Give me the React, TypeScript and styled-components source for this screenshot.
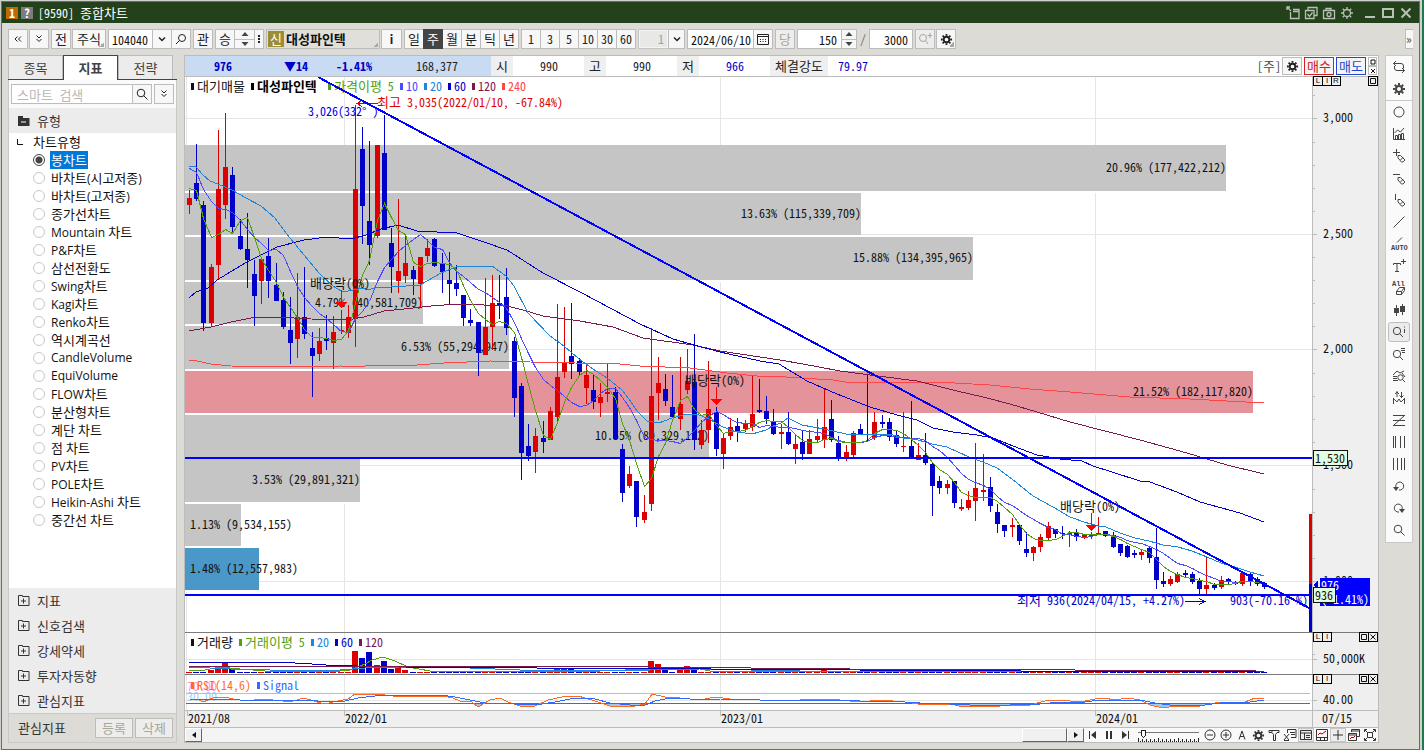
import React from "react";
import styled, { createGlobalStyle, css } from "styled-components";

const MONO = `"Noto Sans Mono CJK KR", "Noto Sans CJK KR", monospace`;
const UI = `"Open Sans", "Noto Sans Mono CJK KR", "Noto Sans CJK KR", sans-serif`;
const RED = "#dd0000";
const BLUE = "#0000c8";
const LINE = "#bcbcbc";

const Global = createGlobalStyle`
  * { box-sizing: border-box; }
  body { margin: 0; background: #c9cac8; font-family: ${MONO}; font-size: 12px; line-height: 16px; color: #111; }
  button, input, select { font: inherit; color: inherit; margin: 0; padding: 0; border: 0; background: none; border-radius: 0; }
`;

/* Hangul is set one pixel larger than the Latin letters and digits beside it. */
const Hangul = styled.span`
  font-size: 13px;
`;
const Mix = ({ children, svg }: { children: string; svg?: boolean }) => (
  <>
    {children
      .split(/([\uac00-\ud7a3]+)/)
      .filter(Boolean)
      .map((s, i) => (/[\uac00-\ud7a3]/.test(s) ? <Hangul as={svg ? "tspan" : "span"} key={i}>{s}</Hangul> : s))}
  </>
);

/* ---------- window frame ---------- */
const Desktop = styled.div`
  min-height: 100vh;
  display: flex;
  padding: 1px 4px 0 1px;
  background: linear-gradient(to left, #1f7a4a 2px, #d0d0d0 2px);
`;
const Window = styled.div`
  flex: 1;
  min-width: 0;
  display: flex;
  flex-direction: column;
  border: 1px solid #6a6c68;
  background: #dcdbd5;
`;
const TitleBar = styled.header`
  height: 21px;
  display: flex;
  align-items: center;
  gap: 3px;
  padding: 0 6px 0 4px;
  background: #23421b;
  color: #fff;
`;
const TitleBadge = styled.span<{ $bg: string }>`
  width: 12px;
  height: 12px;
  background: ${(p) => p.$bg};
  font-weight: 700;
  line-height: 12px;
  text-align: center;
`;
const Title = styled.h1`
  flex: 1;
  margin: 0 0 0 2px;
  font-size: 12px;
  font-weight: 400;
`;
const TitleButton = styled.button`
  width: 15px;
  height: 16px;
  display: flex;
  align-items: center;
  justify-content: center;
  color: #b9c0b5;
`;

/* ---------- toolbar ---------- */
const Toolbar = styled.div`
  height: 32px;
  display: flex;
  align-items: center;
  padding: 0 6px;
  gap: 2px;
`;
const boxed = css`
  height: 20px;
  border: 1px solid ${LINE};
  background: #f7f7f7;
`;
const ToolButton = styled.button<{ $w?: number; $h?: number; $muted?: boolean; $active?: boolean; $corner?: boolean }>`
  ${boxed}
  width: ${(p) => p.$w ?? 20}px;
  height: ${(p) => p.$h ?? 20}px;
  flex: none;
  display: flex;
  align-items: center;
  justify-content: center;
  color: ${(p) => (p.$active ? "#fff" : p.$muted ? "#a9a59a" : "#222")};
  ${(p) => p.$active && "background: #444; border-color: #444; z-index: 1;"}
  ${(p) => p.$muted && "background: #ededeb;"}
  ${(p) => p.$corner && `background: linear-gradient(135deg, transparent 50%, #a8a8a8 50%) right 1px bottom 1px / 5px 5px no-repeat, #f7f7f7;`}
`;
const Joined = styled.div`
  display: flex;
  flex: none;
  & > * + * { margin-left: -1px; }
`;
const Pair = styled.div`
  display: flex;
  flex: none;
  gap: 1px;
`;
const Field = styled.input<{ $w: number; $right?: boolean }>`
  ${boxed}
  width: ${(p) => p.$w}px;
  background: #fff;
  padding: 0 ${(p) => (p.$right ? 4 : 0)}px 0 ${(p) => (p.$right ? 0 : 3)}px;
  text-align: ${(p) => (p.$right ? "right" : "left")};
`;
const StockName = styled.button`
  ${boxed}
  width: 114px;
  flex: none;
  display: flex;
  align-items: center;
  gap: 2px;
  padding: 0 1px;
  background: linear-gradient(135deg, transparent 50%, #a8a8a8 50%) right 1px bottom 1px / 5px 5px no-repeat, #e0dfda;
  font-weight: 700;
  font-size: 13px;
`;
const NewMark = styled.span`
  width: 16px;
  height: 16px;
  background: #9b8d33;
  color: #fff;
  font-weight: 400;
  text-align: center;
`;
const SpinBox = styled.div<{ $w: number }>`
  ${boxed}
  width: ${(p) => p.$w}px;
  display: flex;
  flex-direction: column;
  & button { flex: 1; display: flex; align-items: center; justify-content: center; color: #444; }
  & button + button { border-top: 1px solid ${LINE}; }
`;
const PickSelect = styled.select`
  ${boxed}
  width: 31px;
  appearance: none;
  background: #eee;
  box-shadow: inset 0 0 0 1px #fff;
  color: #888;
  text-align: right;
  padding-right: 4px;
`;
const Slash = styled.span`
  width: 8px;
  text-align: center;
  color: #666;
`;
const Spacer = styled.span<{ $w?: number }>`
  ${(p) => (p.$w ? `width: ${p.$w}px; flex: none;` : "flex: 1;")}
`;
const MoreButton = styled.button`
  ${boxed}
  width: 8px;
  border-right: 0;
  color: #444;
  line-height: 12px;
  display: flex;
  align-items: center;
`;

/* ---------- workspace ---------- */
const Workspace = styled.main`
  flex: 1;
  display: flex;
  align-items: stretch;
  padding: 0 6px 6px;
`;
const SidePanel = styled.aside`
  width: 169px;
  flex: none;
  margin-right: 7px;
  display: flex;
  flex-direction: column;
`;
const Tabs = styled.div`
  height: 25px;
  display: flex;
  border-bottom: 1px solid #444;
`;
const Tab = styled.button<{ $on?: boolean }>`
  width: 55px;
  height: ${(p) => (p.$on ? 25 : 24)}px;
  border: 1px solid ${(p) => (p.$on ? "#444" : LINE)};
  border-bottom: 0;
  background: ${(p) => (p.$on ? "#fff" : "#ececec")};
  font-weight: ${(p) => (p.$on ? 700 : 400)};
  color: #444;
`;
const SideBody = styled.div`
  flex: 1;
  display: flex;
  flex-direction: column;
  border: 1px solid #c9c9c9;
  border-top: 0;
  background: #fff;
`;
const SearchRow = styled.div`
  display: flex;
  gap: 2px;
  padding: 4px 2px;
  background: #fafafa;
`;
const SearchInput = styled.input`
  ${boxed}
  width: 122px;
  background: #fff;
  padding-left: 5px;
  &::placeholder { color: #b8b8b8; opacity: 1; font-size: 13px; }
`;
const Section = styled.button`
  width: 100%;
  height: 25px;
  display: flex;
  align-items: center;
  gap: 7px;
  padding-left: 9px;
  background: #ececec;
  color: #333;
  text-align: left;
`;
const TreeHead = styled.div`
  height: 18px;
  display: flex;
  align-items: center;
  font-family: ${UI};
  color: #111;
  gap: 10px;
  padding-left: 8px;
`;
const TypeList = styled.ul`
  list-style: none;
  margin: 0;
  padding: 0;
  flex: 1;
`;
const TypeRow = styled.li`
  height: 18px;
  display: flex;
  align-items: center;
  gap: 5px;
  padding-left: 24px;
  font-family: ${UI};
`;
const Radio = styled.input`
  appearance: none;
  width: 12px;
  height: 12px;
  border: 1px solid #c8c8c8;
  border-radius: 50%;
  background: #fff;
  &:checked { border-color: #444; background: radial-gradient(circle, #444 3px, #fff 4px); }
`;
const TypeLabel = styled.label<{ $on: boolean }>`
  height: 18px;
  padding: 0 1px;
  line-height: 18px;
  white-space: nowrap;
  ${(p) => p.$on && "background: #0078d7; color: #fff;"}
`;
const SideFoot = styled.div`
  height: 29px;
  display: flex;
  align-items: center;
  gap: 2px;
  padding: 0 3px 0 9px;
  border-top: 1px solid #c9c9c9;
  background: #dcdbd5;
  color: #333;
`;
const FootTitle = styled.span`
  flex: 1;
`;

/* ---------- chart frame ---------- */
const ChartFrame = styled.section`
  flex: 1;
  min-width: 0;
  display: flex;
  flex-direction: column;
  border: 1px solid ${LINE};
  background: #fff;
`;
const Quote = styled.div`
  height: 21px;
  display: flex;
  align-items: center;
  border-bottom: 1px solid ${LINE};
  line-height: 20px;
`;
const Cell = styled.span<{ $w: number; $kind?: "band" | "label"; $align?: string; $pad?: number; $color?: string; $bold?: boolean }>`
  width: ${(p) => p.$w}px;
  flex: none;
  height: 20px;
  white-space: nowrap;
  text-align: ${(p) => p.$align ?? "center"};
  padding-right: ${(p) => p.$pad ?? 0}px;
  color: ${(p) => p.$color ?? "#222"};
  font-weight: ${(p) => (p.$bold ? 700 : 400)};
  background: ${(p) => (p.$kind === "band" ? "#c9dbf2" : p.$kind === "label" ? "#efefef" : "transparent")};
`;
const OrderButton = styled.button<{ $c: string }>`
  width: 30px;
  height: 18px;
  margin-left: 2px;
  border: 1px solid ${(p) => p.$c};
  background: #f4f4f8;
  color: ${(p) => p.$c};
  line-height: 16px;
`;
const MiniStack = styled.div`
  display: flex;
  flex-direction: column;
  margin: 0 1px 0 2px;
  & button { width: 9px; height: 9px; border: 1px solid ${LINE}; display: flex; align-items: center; justify-content: center; }
`;
const Pane = styled.div<{ $h: number; $line: string }>`
  height: ${(p) => p.$h}px;
  display: flex;
  border-bottom: 1px solid ${(p) => p.$line};
`;
const PlotBox = styled.div`
  flex: 1;
  min-width: 0;
  & svg { display: block; }
`;
const Axis = styled.div`
  width: 66px;
  flex: none;
  position: relative;
  border-left: 1px solid ${LINE};
  background: #efefef;
`;
const AxisKeys = styled.div<{ $side: "left" | "right" }>`
  position: absolute;
  top: -1px;
  ${(p) => p.$side}: 0;
  display: flex;
  & > * + * { margin-left: -1px; }
`;
const AxisKey = styled.button`
  width: 10px;
  height: 10px;
  border: 1px solid #000;
  background: #efefef;
  display: flex;
  align-items: center;
  justify-content: center;
  font-family: "Liberation Sans", sans-serif;
  font-size: 8px;
  line-height: 8px;
`;
const DateBar = styled.div`
  height: 17px;
  display: flex;
  border-bottom: 1px solid ${LINE};
  background: #efefef;
  & svg { overflow: visible; }
`;
const Bottom = styled.div`
  height: 14px;
  display: flex;
  background: #f9f9f9;
`;
const Track = styled.div`
  flex: 1;
  display: flex;
  justify-content: space-between;
  background: #f4f4f4;
`;
const Raised = styled.button<{ $w: number }>`
  width: ${(p) => p.$w}px;
  height: 14px;
  border: 1px solid #fff;
  border-right-color: #666;
  border-bottom-color: #666;
  background: #f0f0f0;
  display: flex;
  align-items: center;
  justify-content: center;
`;
const PlayGroup = styled.div`
  display: flex;
  align-items: center;
  padding: 0 1px;
`;
const SmallTool = styled.button<{ $on?: boolean }>`
  width: 16px;
  height: 14px;
  display: flex;
  align-items: center;
  justify-content: center;
  color: #333;
  ${(p) => p.$on && "background: #ececec; box-shadow: 0 0 0 1px #c6c6c6 inset;"}
`;

/* ---------- drawing tools on the right ---------- */
const ToolRail = styled.nav`
  width: 28px;
  flex: none;
  align-self: flex-start;
  margin-left: 6px;
  border: 1px solid #c8c8c8;
  background: #fafafa;
  display: flex;
  flex-direction: column;
  align-items: center;
  padding-bottom: 1px;
`;
const RailButton = styled.button<{ $on?: boolean; $last?: boolean }>`
  width: ${(p) => (p.$on ? 22 : 26)}px;
  height: ${(p) => (p.$on ? 20 : 22)}px;
  margin: ${(p) => (p.$on ? "1px 0" : "0")};
  display: flex;
  align-items: center;
  justify-content: center;
  color: #444;
  ${(p) => p.$last && `height: 23px; border-bottom: 1px solid #c8c8c8;`}
  ${(p) => p.$on && "border: 1px solid #bdbdbd; border-radius: 3px; background: #ececec;"}
`;

/* ---------- icons ---------- */
const I = ({ d, s = 14, f, w = 1, children }: { d?: string; s?: number; f?: string; w?: number; children?: React.ReactNode }) => (
  <svg width={s} height={s} viewBox={`0 0 ${s} ${s}`} fill="none" stroke="currentColor" strokeWidth={w}>
    {d && <path d={d} />}
    {f && <path d={f} fill="currentColor" stroke="none" />}
    {children}
  </svg>
);
const Gear = ({ s = 14, thin }: { s?: number; thin?: boolean }) => (
  <svg width={s} height={s} viewBox="0 0 14 14" fill="none" stroke="currentColor">
    <circle cx="7" cy="7" r={thin ? 3.5 : 3} strokeWidth={thin ? 1.3 : 2} />
    <path d="M7 1v2M7 11v2M1 7h2M11 7h2M2.8 2.8l1.4 1.4M9.8 9.8l1.4 1.4M2.8 11.2l1.4-1.4M9.8 4.2l1.4-1.4" strokeWidth={thin ? 1.3 : 2} />
  </svg>
);
const Lens = () => <I d="M8.700 8.700L12.500 12.500"><circle cx="6" cy="6" r="3.800" /></I>;
const Chevrons = ({ down }: { down?: boolean }) => (
  <I s={10} d={down ? "M2.5 1.5l2.5 2.5 2.5-2.5M2.5 5l2.5 2.5 2.5-2.5" : "M4.5 2.5L2 5l2.500 2.500M8 2.500L5.500 5l2.500 2.500"} />
);
const UpTri = () => <I s={8} f="M0.500 6h7L4 2z" />;
const DownTri = () => <I s={8} f="M0.500 2h7L4 6z" />;

const pen = "M6 6.500h2.500l4.500 4.500-2 2h-1.500L6 9zM8.500 11l2.500-2.500";
const railIcons: { name: string; icon: React.ReactNode }[] = [
  { name: "새로고침", icon: <I d="M4 1L1.500 3.500 4 6M1.500 3.500h7.500q2.500 0 2.500 2.500v2.500M10 8l2.500 2.500L10 13M12.500 10.500H5Q2.500 10.500 2.500 8V6" /> },
  { name: "설정", icon: <Gear /> },
  { name: "원", icon: <I><circle cx="7" cy="7" r="5" /></I> },
  { name: "지표", icon: <I d="M1.500 1v11.500H13M3.500 12V8.500h2V12M6.500 12V7.500h2V12M9.500 12V6.500h2V12M2.500 6l3-3 3 2 3.500-4" /> },
  { name: "십자 그리기", icon: <I d={`M4.500 0v7M1 3.500h7${pen}`} /> },
  { name: "수평선 그리기", icon: <I d={`M1 3.500h7${pen}`} /> },
  { name: "수직선 그리기", icon: <I d={`M3.500 1v6${pen}`} /> },
  { name: "추세선", icon: <I d="M1.500 12.500l11-11" /> },
  {
    name: "자동 추세선",
    icon: (
      <svg width="18" height="16" viewBox="0 0 18 16">
        <path d="M7 6.500l5-5" stroke="currentColor" />
        <text x="1" y="14" fontSize="7" fontWeight="700" fill="currentColor" fontFamily="Liberation Mono, monospace">AUTO</text>
      </svg>
    ),
  },
  { name: "글자", icon: <I d="M1.500 6V4.500h7V6M5 4.500v8.500M3 12.500h4M11.500 0v5M9 2.500h5" /> },
  {
    name: "모두 지우기",
    icon: (
      <svg width="18" height="16" viewBox="0 0 18 16" fill="none" stroke="currentColor">
        <text x="2" y="6" fontSize="7" fontWeight="700" fill="currentColor" stroke="none" fontFamily="Liberation Mono, monospace">All</text>
        <path d="M6.500 11.500l3-4h5v3l-3 4h-5zM6.500 11.500h5l3-4M11.500 11.500v3" />
      </svg>
    ),
  },
  { name: "봉", icon: <I d="M4.500 2v11M10.500 1v11" f="M2 5h5v5H2zM8 3h5v6H8z" /> },
  { name: "정보 조회", icon: <I d="M7.800 8.800L11 12M12.500 4v4" f="M12 1.500h1v1h-1z"><circle cx="5" cy="6" r="3.700" /></I> },
  { name: "목록 조회", icon: <I d="M7.800 9.800L11 13M9 1.500h4M9 3.500h4M10 5.500h3"><circle cx="5" cy="7" r="3.700" /></I> },
  { name: "차트 조회", icon: <I d="M1 6l4-4 3 2 4-2M1 7.500h4M1 9.500h4M1 11.500h5M10.500 10.500l2.500 2.500M10 4l3 4"><circle cx="8.500" cy="8.500" r="2.700" /></I> },
  { name: "고저 표시", icon: <I d="M1.500 7v6M12.500 7v6M2 8l3 3 2-3 2 3 3-3M5 0v6M3 3l2-2 2 2M9.500 1v6M7.500 4.500l2 2 2-2" /> },
  { name: "패턴", icon: <I d="M1 2.500h12M1 7.500h12M1 12.500h12M12 3L2 12" /> },
  { name: "세로선", icon: <I d="M1.500 1v12M3.500 1v12M8.500 1v12M12.500 1v12" /> },
  { name: "등간격선", icon: <I d="M1.500 1v12M5.500 1v12M9.500 1v12M12.500 1v12" /> },
  { name: "되돌리기", icon: <I d="M4 8.500A4 4 0 1 1 7 11" f="M1 8h6l-3 4z" /> },
  { name: "다시하기", icon: <I d="M10 8.500A4 4 0 1 0 7 11" f="M7 8h6l-3 4z" /> },
  { name: "확대", icon: <Lens /> },
];

/* ---------- data ---------- */
/* [high, body top, body bottom, low, 1 = rise] per weekly candle, as chart ordinates */
const candles: number[][] = [
  [190,198,205,214,1],[144,183,199,201,0],[201,205,323,331,0],[264,267,323,327,1],[130,189,265,280,1],[113,167,205,219,1],[167,175,227,232,0],[219,236,249,250,0],[213,249,260,288,0],[260,274,296,326,0],
  [257,259,281,304,1],[238,256,281,298,0],[263,285,301,301,0],[292,300,327,329,0],[297,330,343,364,0],[273,317,339,358,1],[267,317,334,339,0],[332,348,356,397,0],[328,341,354,361,1],[315,338,341,350,0],
  [316,332,343,369,1],[310,330,331,334,1],[305,317,333,338,1],[105,189,318,347,1],[127,149,206,244,0],[141,221,245,265,0],[145,145,236,238,1],[115,153,230,230,0],[228,243,267,293,0],[199,271,281,293,1],
  [234,263,276,283,1],[266,270,279,295,0],[257,257,284,307,1],[239,248,256,262,1],[238,239,266,267,0],[253,264,272,293,0],[252,280,284,305,0],[265,283,289,296,0],[295,295,318,326,0],[309,320,323,326,0],
  [322,322,353,376,0],[278,327,355,355,1],[275,303,327,350,1],[275,303,305,319,0],[268,297,328,335,0],[337,341,398,417,0],[383,386,453,480,0],[424,446,456,461,0],[428,436,452,473,1],[421,438,442,453,0],
  [407,411,440,440,1],[304,377,417,422,1],[307,362,372,378,1],[303,356,364,379,0],[358,361,372,376,0],[363,375,388,404,1],[375,390,402,409,0],[383,397,403,417,1],[364,392,394,402,1],[387,392,439,439,0],
  [444,449,493,502,0],[466,474,486,488,1],[481,481,517,527,0],[495,512,520,523,1],[328,396,504,511,1],[357,383,393,420,1],[374,389,401,406,0],[375,407,417,417,0],[357,404,419,430,1],[349,381,390,394,1],
  [334,382,440,450,0],[420,430,445,449,1],[361,409,430,443,1],[407,412,449,456,0],[434,438,454,469,1],[418,427,436,440,1],[418,426,431,442,0],[420,424,429,432,1],[376,414,427,431,1],[379,410,412,413,0],
  [396,411,419,424,0],[409,421,434,435,0],[424,432,434,449,1],[412,432,444,445,0],[435,444,449,464,1],[431,442,454,460,0],[430,439,454,454,1],[419,436,440,442,1],[388,427,440,448,1],[400,419,440,442,0],
  [436,443,458,461,0],[445,452,458,461,1],[431,433,455,457,1],[424,429,434,435,0],[374,434,435,441,0],[412,422,438,440,1],[415,422,424,428,0],[418,422,437,441,0],[430,435,444,447,0],[412,446,447,452,1],
  [401,446,459,459,0],[443,455,460,460,1],[433,455,463,465,0],[462,464,486,516,0],[476,481,488,494,0],[480,484,488,494,1],[481,481,503,508,0],[499,507,509,511,1],[491,500,508,510,1],[443,488,501,521,1],
  [454,490,492,501,1],[477,487,506,512,0],[504,512,524,533,0],[525,525,531,537,0],[518,525,527,537,1],[525,525,541,545,0],[532,549,553,557,0],[546,547,553,561,1],[534,537,547,552,1],[522,526,538,540,1],
  [529,529,534,538,0],[526,533,534,539,0],[531,533,535,547,1],[529,532,537,541,0],[534,535,538,539,1],[532,534,536,539,1],[517,533,534,535,1],[531,531,536,537,0],[532,535,547,548,0],[544,544,553,556,0],
  [545,546,557,558,0],[550,553,555,558,0],[549,552,555,560,1],[547,548,558,563,0],[528,557,580,589,0],[572,581,584,587,0],[576,579,584,586,1],[572,574,582,583,1],[570,573,575,578,0],[572,574,582,584,0],
  [578,581,589,594,0],[557,585,589,595,1],[583,585,588,590,0],[576,580,587,589,1],[578,579,581,584,0],[581,582,584,585,0],[571,573,584,586,1],[573,574,582,586,0],[577,579,584,586,0],[582,583,587,589,0],
];
const cx = (i: number) => Math.round(189 + i * 7.215);
const series = (ys: number[]) => ys.map((y, i) => `${cx(i) + 0.5},${y + 0.5}`).join(" ");
const ma5 = [188,190,218,237,234,229,233,220,217,237,258,270,282,297,307,317,329,337,337,338,340,339,330,303,275,260,220,203,217,230,234,262,266,263,262,263,264,269,285,300,313,319,324,321,323,332,357,384,410,435,439,422,402,387,375,370,374,380,387,398,423,440,463,486,478,456,443,420,400,396,409,415,413,425,433,431,431,430,426,422,420,421,421,427,434,440,442,442,439,438,441,442,442,442,440,433,429,429,430,433,439,445,452,462,469,474,482,492,495,497,497,497,501,507,514,524,533,538,540,540,539,536,532,532,534,534,534,534,536,539,543,546,549,552,559,566,571,574,577,578,580,581,584,584,584,583,581,581,582,584];
const ma10 = [168,172,189,201,208,209,212,220,229,237,243,250,249,255,271,286,297,306,313,318,324,331,332,318,311,301,281,267,259,251,245,239,234,240,247,249,262,271,276,282,289,292,297,302,308,322,338,353,367,379,385,390,396,402,406,405,400,393,388,388,397,407,420,437,439,440,440,441,443,437,430,422,416,411,414,419,422,423,423,427,425,426,427,427,428,430,431,432,433,437,440,442,442,442,441,437,435,435,437,437,438,438,440,446,450,457,465,473,479,482,485,489,496,502,505,510,515,519,523,527,529,534,534,536,537,536,534,534,535,537,540,542,543,546,549,553,558,563,565,568,572,575,578,581,581,582,581,581,582,584];
const ma20 = "189,166 196,167 203,175 210,181 218,184 232,190 246,198 261,206 275,218 290,238 304,255 319,273 333,286 341,291 348,291 363,288 369,290 376,287 391,287 406,286 420,285 427,281 441,273 456,267 470,266 492,266 506,276 514,286 528,313 550,336 564,346 579,359 593,369 607,378 622,390 629,399 637,411 647,421 659,423 672,418 687,414 697,414 709,419 723,427 737,432 752,434 766,430 773,426 781,423 788,418 802,425 824,429 846,434 868,435 890,434 903,438 918,440 932,444 947,447 969,457 983,462 997,468 1012,479 1033,496 1053,507 1070,517 1084,522 1098,526 1106,527 1120,533 1135,538 1149,541 1163,545 1178,547 1192,551 1207,557 1221,563 1235,567 1250,572 1264,576";
const ma60 = "189,298 196,292 208,288 217,280 247,262 277,247 304,240 327,237 351,239 366,235 381,229 398,225 417,231 457,233 484,242 507,250 543,273 580,292 640,324 673,339 694,345 720,352 760,361 779,364 807,381 837,394 870,407 897,415 917,420 933,428 953,432 977,435 993,438 1013,446 1037,455 1060,459 1082,461 1093,466 1112,472 1140,481 1150,482 1177,492 1200,502 1240,513 1264,522";
const ma120 = "189,331 211,327 231,322 251,318 277,317 311,319 347,320 364,317 384,311 404,309 431,306 457,304 484,305 503,305 523,310 543,316 580,321 613,327 643,338 693,345 720,351 780,360 803,364 840,371 870,375 917,381 957,391 983,397 1010,404 1037,412 1070,422 1140,440 1187,453 1227,465 1264,474";
const ma240 = "189,360 197,361 211,364 231,366 297,367 341,366 357,367 374,365 417,365 444,363 490,361 530,362 620,364 640,366 690,368 727,373 757,376 770,376 833,380 845,382 937,382 990,385 1030,389 1070,392 1130,397 1190,399 1264,403";

const profile = [
  { y: 145, h: 46, to: 1226, t: "20.96% (177,422,212)" },
  { y: 193, h: 42, to: 861, t: "13.63% (115,339,709)" },
  { y: 237, h: 43, to: 973, t: "15.88% (134,395,965)" },
  { y: 282, h: 42, to: 423, t: "4.79% (40,581,709)" },
  { y: 326, h: 43, to: 509, t: "6.53% (55,294,947)" },
  { y: 371, h: 42, to: 1253, t: "21.52% (182,117,820)", c: "#e5939a" },
  { y: 415, h: 42, to: 709, t: "10.55% (89,329,112)" },
  { y: 459, h: 43, to: 360, t: "3.53% (29,891,321)" },
  { y: 504, h: 42, to: 241, t: "1.13% (9,534,155)", left: true },
  { y: 548, h: 42, to: 259, t: "1.48% (12,557,983)", c: "#4a98c8", left: true },
];
const years = [
  { x: 187, t: "2021/08" },
  { x: 344, t: "2022/01" },
  { x: 720, t: "2023/01" },
  { x: 1095, t: "2024/01" },
];
const prices = [
  { y: 118, t: "3,000" },
  { y: 234, t: "2,500" },
  { y: 349, t: "2,000" },
  { y: 465, t: "1,500" },
  { y: 581, t: "1,000" },
];
const volumeBars: Record<number, number> = { 3: 3, 4: 6, 5: 10, 6: 4, 23: 22, 24: 15, 25: 21, 26: 8, 27: 12, 28: 4, 29: 6, 30: 3, 34: 2, 50: 3, 51: 4, 52: 4, 53: 4, 64: 12, 65: 9, 66: 5, 68: 5, 69: 7, 70: 5, 88: 3, 94: 3, 109: 3, 134: 3 };
const rsi = "190,699 197,699 203,702 213,698 225,697 233,699 247,701 262,699 283,701 293,701 304,698 317,702 325,704 333,702 348,699 355,694 365,695 377,694 393,696 410,696 443,696 453,698 460,701 472,702 478,707 490,700 500,698 508,702 520,706 535,706 548,700 562,697 578,696 592,700 610,706 630,707 645,704 652,694 665,697 680,698 700,700 715,697 730,699 760,700 800,700 830,699 860,702 880,700 905,702 925,705 940,704 952,704 962,707 975,706 1000,706 1030,705 1045,701 1060,700 1080,702 1095,699 1104,698 1115,700 1127,698 1140,700 1150,705 1163,708 1175,706 1200,706 1215,703 1225,702 1245,702 1255,698 1264,698";
const signal = "190,699 205,700 220,699 240,700 262,700 290,701 310,700 325,702 345,701 358,698 375,696 395,695 440,695 455,697 470,700 485,703 500,703 515,704 535,705 555,702 575,698 595,699 610,703 630,705 645,705 655,701 670,698 690,699 720,699 760,700 800,700 830,700 860,701 890,701 920,703 950,704 970,705 1010,705 1040,704 1060,702 1085,702 1100,700 1120,700 1140,700 1155,703 1170,705 1205,705 1220,703 1250,702 1264,700";

const chartTypes = ["봉차트", "바차트(시고저종)", "바차트(고저종)", "종가선차트", "Mountain 차트", "P&F차트", "삼선전환도", "Swing차트", "Kagi차트", "Renko차트", "역시계곡선", "CandleVolume", "EquiVolume", "FLOW차트", "분산형차트", "계단 차트", "점 차트", "PV차트", "POLE차트", "Heikin-Ashi 차트", "중간선 차트"];

/* ---------- chart parts ---------- */
const Label = styled.text<{ $bold?: boolean }>`
  font: ${(p) => (p.$bold ? 700 : 400)} 12px ${MONO};
  white-space: pre;
`;
const Plot = ({ top, height, children }: { top: number; height: number; children: React.ReactNode }) => (
  <PlotBox>
    <svg width="100%" height={height} viewBox={`185 ${top} 1127 ${height}`} preserveAspectRatio="xMinYMin meet" fill="none" shapeRendering="crispEdges">
      {years.map((g) => (
        <rect key={g.x} x={g.x === 187 ? 186 : g.x} y={top} width="1" height={height} fill="#e6e6e6" />
      ))}
      {children}
    </svg>
  </PlotBox>
);
type Key = { x: number; t: string; c: string; bold?: boolean };
const Legend = ({ y, items }: { y: number; items: Key[] }) => (
  <g>
    {items.map((k) => (
      <g key={k.t} fill={k.c}>
        <rect x={k.x} y={y - 3} width="3" height="7" />
        <Label x={k.x + 6} y={y + 5} $bold={k.bold}><Mix svg>{k.t}</Mix></Label>
      </g>
    ))}
  </g>
);
const Dividend = ({ x, y }: { x: number; y: number }) => (
  <g>
    <Label x={x - 31} y={y - 2} fill="#111"><Mix svg>배당락(0%)</Mix></Label>
    <rect x={x} y={y} width="1" height="14" fill="#f00" />
    <path d={`M${x - 5} ${y + 12}h11l-5.500 6z`} fill="#f00" />
  </g>
);
const Keys = ({ names, closable }: { names: string[]; closable?: boolean }) => (
  <>
    <AxisKeys $side="left">{names.map((n) => <AxisKey key={n}>{n}</AxisKey>)}</AxisKeys>
    <AxisKeys $side="right">
      <AxisKey aria-label="최대화"><I s={6} d="M0.500 0.500h5v5h-5z" /></AxisKey>
      {closable && <AxisKey aria-label="닫기"><I s={6} d="M0.500 0.500l5 5M5.500 0.500l-5 5" /></AxisKey>}
    </AxisKeys>
  </>
);

const MainPlot = () => (
  <Plot top={77} height={555}>
    {prices.map((p) => <rect key={p.t} x="185" y={p.y} width="1127" height="1" fill="#e6e6e6" />)}
    {profile.map((b) => (
      <g key={b.t}>
        <rect x="185" y={b.y} width={b.to - 185} height={b.h} fill={b.c ?? "#c5c5c5"} />
        <rect x="185" y={b.y + b.h} width={b.to - 185} height="2" fill="#fff" />
        <Label x={b.left ? 190 : b.to} y={b.y + Math.floor(b.h / 2) + 4} textAnchor={b.left ? "start" : "end"} fill="#111">{b.t}</Label>
      </g>
    ))}
    {candles.map(([hi, a, b, lo, up], i) => (
      <g key={i} fill={up ? RED : BLUE}>
        <rect x={cx(i)} y={hi} width="1" height={lo - hi} />
        <rect x={cx(i) - 2} y={a} width="5" height={Math.max(1, b - a)} />
      </g>
    ))}
    <polyline points={ma240} stroke="#ff4545" />
    <polyline points={ma120} stroke="#7a1850" />
    <polyline points={ma60} stroke={BLUE} />
    <polyline points={ma20} stroke="#1c86dc" />
    <polyline points={series(ma10)} stroke="#4b4bff" />
    <polyline points={series(ma5)} stroke="#52a00e" />
    <Dividend x={341} y={290} />
    <Dividend x={716} y={387} />
    <Dividend x={1091} y={513} />
    <Legend
      y={86}
      items={[
        { x: 191, t: "대기매물", c: "#111" },
        { x: 251, t: "대성파인텍", c: "#000", bold: true },
        { x: 328, t: "가격이평 5", c: "#52a00e" },
        { x: 400, t: "10", c: "#4b4bff" },
        { x: 424, t: "20", c: "#1c86dc" },
        { x: 448, t: "60", c: BLUE },
        { x: 472, t: "120", c: "#7a1850" },
        { x: 502, t: "240", c: "#ff4545" },
      ]}
    />
    <Label x="308" y="116" fill="#0000e0">3,026(332° )</Label>
    <path d="M357 103.500h21M362 100.500l-5 3 5 3" stroke={RED} />
    <Label x="377" y="107" fill={RED}><Mix svg>최고 3,035(2022/01/10, -67.84%)</Mix></Label>
    <Label x="1017" y="605" fill={BLUE}><Mix svg>최저 936(2024/04/15, +4.27%)</Mix></Label>
    <path d="M1185 601.500h20M1199 598.500l6 3-6 3" stroke={BLUE} />
    <Label x="1230" y="605" fill={BLUE}>903(-70.16 %)</Label>
    <rect x="185" y="457" width="1127" height="2" fill="#0000ff" />
    <rect x="185" y="594" width="1127" height="2" fill="#0000ff" />
    <path d="M318 77L1311 609" stroke="#0000ff" strokeWidth="2" />
    <rect x="1309" y="514" width="3" height="70" fill={RED} />
    <rect x="1309" y="584" width="3" height="48" fill={BLUE} />
  </Plot>
);
const MainAxis = () => (
  <Axis>
    <svg width="65" height="555" viewBox="1313 77 65 555" shapeRendering="crispEdges">
      {prices.map((p) => (
        <g key={p.t}>
          <rect x="1313" y={p.y} width="4" height="1" fill="#bbb" />
          {[23, 46, 69, 92].map((k) => <rect key={k} x="1313" y={p.y - k} width="2" height="1" fill="#bbb" />)}
          <Label x="1323" y={p.y + 4} fill="#111">{p.t}</Label>
        </g>
      ))}
      <rect x="1320" y="578" width="50" height="28" fill="#0000ff" />
      <path d="M1318 581v7l-5-3z" fill="#0000e0" />
      <Label x="1321" y="590" fill="#fff">976</Label>
      <Label x="1321" y="604" fill="#fff">(-1.41%)</Label>
      <rect x="1313.500" y="450.500" width="34" height="15" fill="#e2ffe2" stroke="#111" />
      <Label x="1315" y="463" fill="#111">1,530</Label>
      <rect x="1313.500" y="587.500" width="22" height="15" fill="#e2ffe2" stroke="#111" />
      <Label x="1315" y="600" fill="#111">936</Label>
    </svg>
    <Keys names={["L", "I", "R"]} />
  </Axis>
);
const VolumePane = () => (
  <Pane $h={42} $line="#7a7a7a">
    <Plot top={633} height={41}>
      <rect x="185" y="659" width="1127" height="1" fill="#e6e6e6" />
      {candles.map((c, i) => {
        const h = volumeBars[i] ?? 1;
        return <rect key={i} x={cx(i) - 3} y={673 - h} width="6" height={h} fill={c[4] ? RED : BLUE} />;
      })}
      <polyline points="189,671 205,670 220,667 240,669 265,671 340,671 350,670 365,664 372,660 383,657 395,661 408,667 430,671 600,671 650,669 665,667 685,667 700,669 710,671 1264,671" stroke="#52a00e" />
      <polyline points="189,667 230,669 270,670 340,670 365,668 400,667 470,668 520,670 650,670 700,669 800,671 1264,671" stroke="#1c86dc" />
      <polyline points="189,662.500 286,662.500 320,664.500 332,665.500 430,667.500 640,668.500 780,669.500 1100,671.500 1264,671.500" stroke={BLUE} />
      <polyline points="189,666.500 600,666.500 900,669.500 1247,670.500 1264,671.500" stroke="#7a1850" />
      <Legend
        y={642}
        items={[
          { x: 191, t: "거래량", c: "#111" },
          { x: 239, t: "거래이평 5", c: "#52a00e" },
          { x: 311, t: "20", c: "#1c86dc" },
          { x: 335, t: "60", c: BLUE },
          { x: 359, t: "120", c: "#7a1850" },
        ]}
      />
    </Plot>
    <Axis>
      <svg width="65" height="41" viewBox="1313 633 65 41" shapeRendering="crispEdges">
        <rect x="1313" y="659" width="4" height="1" fill="#bbb" />
        <rect x="1313" y="654" width="2" height="1" fill="#bbb" />
        <Label x="1323" y="663" fill="#111">50,000K</Label>
      </svg>
      <Keys names={["L", "I"]} closable />
    </Axis>
  </Pane>
);
const RsiPane = () => (
  <Pane $h={36} $line={LINE}>
    <Plot top={675} height={35}>
      <rect x="185" y="700" width="1127" height="1" fill="#e6e6e6" />
      <Label x="187" y="691" fill="#ff9bc8">70.00</Label>
      <Label x="187" y="701" fill="#9fcdf5">30.00</Label>
      <Legend
        y={685}
        items={[
          { x: 191, t: "RSI(14,6)", c: "#ff6a1f" },
          { x: 257, t: "Signal", c: "#2f6bff" },
        ]}
      />
      <clipPath id="below"><rect x="185" y="703" width="1127" height="7" /></clipPath>
      <polygon points={`${rsi} 1264,696 190,696`} fill="#9cc8f5" clipPath="url(#below)" />
      <rect x="186" y="693" width="1124" height="1" fill="#ff9bc8" />
      <rect x="186" y="703" width="1124" height="1" fill="#ff00ff" />
      <polyline points={rsi} stroke="#ff6a1f" />
      <polyline points={signal} stroke="#2f6bff" />
    </Plot>
    <Axis>
      <svg width="65" height="35" viewBox="1313 675 65 35" shapeRendering="crispEdges">
        <rect x="1313" y="700" width="4" height="1" fill="#bbb" />
        <Label x="1323" y="704" fill="#111">40.00</Label>
      </svg>
      <Keys names={["L", "I"]} closable />
    </Axis>
  </Pane>
);

const bottomTools: { name: string; icon: React.ReactNode; on?: boolean }[] = [
  { name: "축소", icon: <I d="M4 7h6"><circle cx="7" cy="7" r="5" /></I> },
  { name: "확대", icon: <I d="M4 7h6M7 4v6"><circle cx="7" cy="7" r="5" /></I> },
  { name: "자동", icon: <I d="M4 11.500L7 3l3 8.500M5 8.500h4" /> },
  { name: "설정", icon: <Gear s={13} /> },
  { name: "도구", icon: <I d="M2 4.500v-2h10v2M2 4.500h3l1.500 2v6h2v-6L10 4.500h2M5 2v2" /> },
  { name: "엑셀 저장", icon: <I d="M4.500 5V1.500h8.500v8H8M7 4.500h5M8 6.500h4M1 6l5 6M6 6l-5 6M1 12.500h5" /> },
  { name: "표", icon: <I d="M1.500 2.500h11v9h-11zM1.500 5h11M5.500 5v6M7 7.500h4M7 9.500h4" />, on: true },
  { name: "차트", icon: <I d="M1.500 1.500h11v11h-11zM1.500 9.500h11M5.500 9.500v3M9.500 9.500v3"><path d="M3 7l2-2 2 1 4-3" stroke="#a00" /></I> },
  { name: "십자선", icon: <I d="M7 2v10M2 7h10" />, on: true },
  { name: "새 창", icon: <I d="M4.500 4V1.500h8v7H10M1.500 5.500h8v7h-8zM1.500 7h8M4.500 3h8"><path d="M3 11l2-2 1 1 2-2" stroke="#a00" /></I> },
  { name: "전체 화면", icon: <I d="M1.500 4V1.500H4M10 1.500h2.500V4M12.500 10v2.500H10M4 12.500H1.500V10M4.500 4.500h5v5h-5zM2 2l2.500 2.500M12 2L9.500 4.500M2 12l2.500-2.500M12 12L9.500 9.500" /> },
];

export default function App() {
  const [type, setType] = React.useState(0);
  return (
    <Desktop>
      <Global />
      <Window>
        <TitleBar>
          <TitleBadge $bg="#c06a00">1</TitleBadge>
          <TitleBadge $bg="#7d7d7d">?</TitleBadge>
          <Title><Mix>[9590] 종합차트</Mix></Title>
          <TitleButton aria-label="창 분리"><I d="M4.500 6v6.500h8.500v-9H7M7 5.500h6M1 1l4 4M1 4V1h3" w={1.3} /></TitleButton>
          <TitleButton aria-label="선택 창"><I d="M1.500 4.500h8.500v8H1.500zM4 4V1.500h9v8h-3M3.500 8l2 2.500 3-4" w={1.3} /></TitleButton>
          <TitleButton aria-label="캡처"><I d="M1.500 4.500h11v8h-11zM4 4V2.500h5V4" w={1.3}><circle cx="7" cy="8.500" r="2" /></I></TitleButton>
          <TitleButton aria-label="설정"><Gear thin /></TitleButton>
          <Spacer $w={2} />
          <TitleButton aria-label="최소화"><I d="M2 11h10" w={2} /></TitleButton>
          <TitleButton aria-label="최대화"><I d="M2 3h10v8H2z" w={2} /></TitleButton>
          <TitleButton aria-label="닫기"><I d="M2.500 2.500l9 9M11.500 2.500l-9 9" w={2} /></TitleButton>
        </TitleBar>

        <Toolbar>
          <Pair>
            <ToolButton aria-label="이전"><Chevrons /></ToolButton>
            <ToolButton aria-label="펼치기"><Chevrons down /></ToolButton>
          </Pair>
          <Pair>
            <ToolButton><Mix>전</Mix></ToolButton>
            <ToolButton $w={34} $corner><Mix>주식</Mix></ToolButton>
          </Pair>
          <Joined>
            <Field $w={45} defaultValue="104040" aria-label="종목코드" />
            <ToolButton aria-label="종목 목록"><I s={10} d="M2 3.500l3 3 3-3" w={1.5} /></ToolButton>
            <ToolButton aria-label="종목 검색"><I d="M5.500 8.500L2 12"><circle cx="8" cy="6" r="3.500" /></I></ToolButton>
          </Joined>
          <ToolButton><Mix>관</Mix></ToolButton>
          <Joined>
            <ToolButton><Mix>승</Mix></ToolButton>
            <SpinBox $w={21}>
              <button aria-label="위"><UpTri /></button>
              <button aria-label="아래"><DownTri /></button>
            </SpinBox>
            <ToolButton $w={10} aria-label="더보기"><I s={8} f="M3 0h2v2H3zM3 3h2v2H3zM3 6h2v2H3z" /></ToolButton>
          </Joined>
          <Pair>
            <StockName><NewMark>신</NewMark>대성파인텍</StockName>
            <ToolButton $w={21}><b>i</b></ToolButton>
          </Pair>
          <Joined>
            {["일", "주", "월", "분", "틱", "년"].map((t) => <ToolButton key={t} $active={t === "주"}><Mix>{t}</Mix></ToolButton>)}
          </Joined>
          <Joined>
            {["1", "3", "5", "10", "30", "60"].map((t) => <ToolButton key={t}>{t}</ToolButton>)}
          </Joined>
          <Joined>
            <PickSelect aria-label="분 단위" disabled><option>1</option></PickSelect>
            <ToolButton $w={17} aria-label="분 단위 목록"><I s={10} d="M2 3.500l3 3 3-3" w={1.5} /></ToolButton>
          </Joined>
          <Joined>
            <Field $w={67} defaultValue="2024/06/10" aria-label="기준일" />
            <ToolButton aria-label="달력"><I d="M1.500 2.500h11v10h-11zM1.500 4.500h11M4 7.500h1M6.500 7.500h1M9 7.500h1M4 9.500h1M6.500 9.500h1M9 9.500h1" /></ToolButton>
          </Joined>
          <ToolButton $muted><Mix>당</Mix></ToolButton>
          <Joined>
            <Field $w={45} $right defaultValue="150" aria-label="표시 개수" />
            <SpinBox $w={16}>
              <button aria-label="늘리기"><UpTri /></button>
              <button aria-label="줄이기"><DownTri /></button>
            </SpinBox>
          </Joined>
          <Slash>/</Slash>
          <Field $w={44} $right defaultValue="3000" aria-label="전체 개수" />
          <Pair>
            <ToolButton $muted aria-label="차트 확대"><I d="M7.500 8.500L10 12M12 1v5M9.500 3.500h4.500"><circle cx="5" cy="6" r="3.500" /></I></ToolButton>
            <ToolButton $corner aria-label="차트 설정"><Gear s={13} /></ToolButton>
          </Pair>
          <Spacer />
          <MoreButton>»</MoreButton>
        </Toolbar>

        <Workspace>
          <SidePanel>
            <Tabs>
              <Tab><Mix>종목</Mix></Tab>
              <Tab $on><Mix>지표</Mix></Tab>
              <Tab><Mix>전략</Mix></Tab>
            </Tabs>
            <SideBody>
              <SearchRow>
                <Joined>
                  <SearchInput placeholder="스마트 검색" aria-label="스마트 검색" />
                  <ToolButton aria-label="검색"><Lens /></ToolButton>
                </Joined>
                <ToolButton aria-label="펼치기"><Chevrons down /></ToolButton>
              </SearchRow>
              <Section>
                <I s={12} f="M0 1h5v2h6.500v8H0z"><path d="M3 7h5" stroke="#fff" /></I><Mix>유형</Mix>
              </Section>
              <TreeHead><I s={6} d="M0.500 0v5.500H6" /><Mix>차트유형</Mix></TreeHead>
              <TypeList>
                {chartTypes.map((t, i) => (
                  <TypeRow key={t}>
                    <Radio type="radio" name="type" id={`type-${i}`} checked={type === i} onChange={() => setType(i)} />
                    <TypeLabel htmlFor={`type-${i}`} $on={type === i}><Mix>{t}</Mix></TypeLabel>
                  </TypeRow>
                ))}
              </TypeList>
              {["지표", "신호검색", "강세약세", "투자자동향", "관심지표"].map((t) => (
                <Section key={t}><I s={12} d="M0.500 10.500v-10h4v1h6.500v9zM3 6h5M5.500 3.500v5" /><Mix>{t}</Mix></Section>
              ))}
              <SideFoot>
                <FootTitle><Mix>관심지표</Mix></FootTitle>
                <ToolButton $w={38} $muted><Mix>등록</Mix></ToolButton>
                <ToolButton $w={38} $muted><Mix>삭제</Mix></ToolButton>
              </SideFoot>
            </SideBody>
          </SidePanel>

          <ChartFrame>
            <Quote>
              <Cell $w={76} $kind="band" $color={BLUE} $bold>976</Cell>
              <Cell $w={70} $kind="band" $color={BLUE} $bold>▼14</Cell>
              <Cell $w={46} $kind="band" $color={BLUE} $bold>-1.41%</Cell>
              <Cell $w={114} $kind="band" $align="right" $pad={33}>168,377</Cell>
              <Cell $w={22} $kind="label"><Mix>시</Mix></Cell>
              <Cell $w={71} $align="right" $pad={26}>990</Cell>
              <Cell $w={22} $kind="label"><Mix>고</Mix></Cell>
              <Cell $w={71} $align="right" $pad={26}>990</Cell>
              <Cell $w={22} $kind="label"><Mix>저</Mix></Cell>
              <Cell $w={71} $align="right" $pad={26} $color={BLUE}>966</Cell>
              <Cell $w={58} $kind="label"><Mix>체결강도</Mix></Cell>
              <Cell $w={50} $color={BLUE}>79.97</Cell>
              <Spacer />
              <Cell $w={26} $color="#444"><Mix>[주]</Mix></Cell>
              <ToolButton $h={18} aria-label="설정"><Gear s={13} /></ToolButton>
              <OrderButton $c="#cc2222"><Mix>매수</Mix></OrderButton>
              <OrderButton $c="#1f48cc"><Mix>매도</Mix></OrderButton>
              <MiniStack>
                <button aria-label="최대화"><I s={6} d="M1 1h4v4H1z" /></button>
                <button aria-label="닫기"><I s={6} d="M1 1l4 4M5 1L1 5" /></button>
              </MiniStack>
            </Quote>
            <Pane $h={556} $line="#7a7a7a">
              <MainPlot />
              <MainAxis />
            </Pane>
            <VolumePane />
            <RsiPane />
            <DateBar>
              <PlotBox>
                <svg width="100%" height="16" viewBox="185 711 1127 16" preserveAspectRatio="xMinYMin meet">
                  {years.map((g) => (
                    <g key={g.t}>
                      <rect x={g.x} y="711" width="1" height="5" fill="#bbb" />
                      <Label x={g.x + 1} y="723" fill="#111">{g.t}</Label>
                    </g>
                  ))}
                </svg>
              </PlotBox>
              <Axis>
                <svg width="65" height="16"><Label x="9" y="12" fill="#111">07/15</Label></svg>
              </Axis>
            </DateBar>
            <Bottom>
              <Track>
                <Raised $w={17} aria-label="왼쪽으로"><I s={8} f="M6 1v6L2 4z" /></Raised>
                <Raised $w={45} aria-label="스크롤" />
              </Track>
              <Raised $w={17} aria-label="오른쪽으로"><I s={8} f="M2 1v6l4-3z" /></Raised>
              <PlayGroup>
                <SmallTool aria-label="처음"><I s={10} d="M1.500 1v8" f="M8 1v8L3 5z" /></SmallTool>
                <SmallTool aria-label="일시정지"><I s={10} d="M3 1v8M7 1v8" w={2} /></SmallTool>
                <SmallTool aria-label="끝"><I s={10} d="M8.500 1v8" f="M2 1v8l5-4z" /></SmallTool>
                <Spacer $w={4} />
                <svg width="64" height="14" fill="none" stroke="#222" shapeRendering="crispEdges" aria-label="속도">
                  <path d="M1 4.500h61" stroke="#777" />
                  {Array.from({ length: 16 }, (_, i) => <path key={i} d={`M${1.5 + i * 4} ${i % 5 ? 11 : 10}v3`} />)}
                  <path d="M1 13.500h61" strokeDasharray="1 1" />
                  <path d="M4.500 2.500h4v5l-2 2-2-2z" fill="#fff" />
                </svg>
              </PlayGroup>
              {bottomTools.map((b) => <SmallTool key={b.name} $on={b.on} aria-label={b.name}>{b.icon}</SmallTool>)}
            </Bottom>
          </ChartFrame>

          <ToolRail>
            {railIcons.map((r, i) => (
              <RailButton key={r.name} aria-label={r.name} $on={i === 12} $last={i === 1}>{r.icon}</RailButton>
            ))}
          </ToolRail>
        </Workspace>
      </Window>
    </Desktop>
  );
}
